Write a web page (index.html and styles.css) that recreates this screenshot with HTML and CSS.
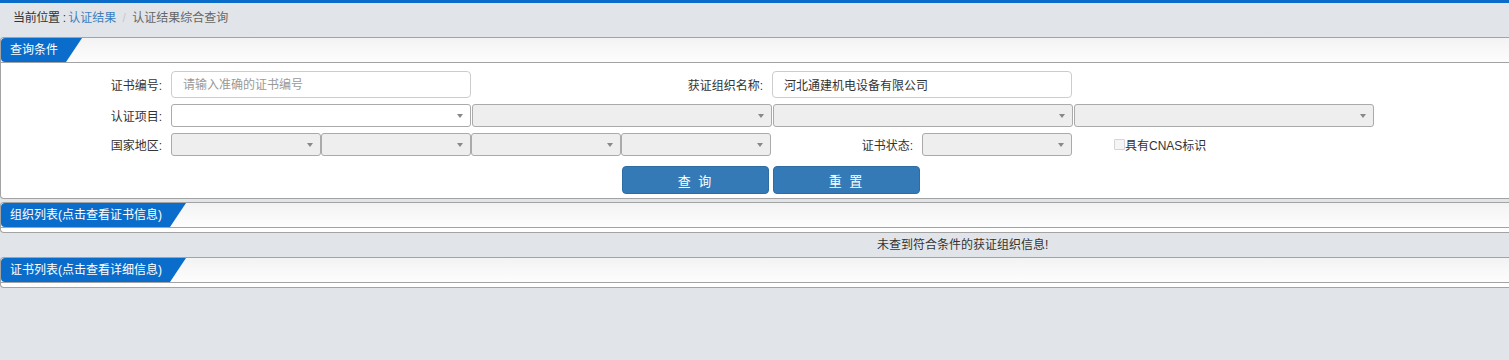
FILE: index.html
```html
<!DOCTYPE html>
<html>
<head>
  <meta charset="UTF-8">
  <title>认证结果综合查询</title>
  <link rel="stylesheet" href="styles.css">
</head>
<body>
  <div class="topbar"></div>
  <div class="crumb">
    <span class="here">当前位置 :</span>
    <a class="crumb-link" href="#">认证结果</a>
    <span class="sep">/</span>
    <span class="current">认证结果综合查询</span>
  </div>

  <div class="panel">
    <div class="panel-head"><span class="tab">查询条件</span></div>
    <div class="panel-body">
      <div class="row">
        <label class="lbl">证书编号:</label>
        <input class="txt" type="text" placeholder="请输入准确的证书编号">
        <label class="lbl lbl-wide">获证组织名称:</label>
        <input class="txt" type="text" value="河北通建机电设备有限公司">
      </div>
      <div class="row">
        <label class="lbl">认证项目:</label>
        <div class="sels">
          <div class="sel sel-wide sel-on"></div>
          <div class="sel sel-wide"></div>
          <div class="sel sel-wide"></div>
          <div class="sel sel-wide"></div>
        </div>
      </div>
      <div class="row">
        <label class="lbl">国家地区:</label>
        <div class="sels sels-tight">
          <div class="sel"></div>
          <div class="sel"></div>
          <div class="sel"></div>
          <div class="sel"></div>
        </div>
        <label class="lbl lbl-mid">证书状态:</label>
        <div class="sel"></div>
        <label class="cnas"><span class="box"></span>具有CNAS标识</label>
      </div>
      <div class="btns">
        <button class="btn" type="button">查 询</button>
        <button class="btn" type="button">重 置</button>
      </div>
    </div>
  </div>

  <div class="panel">
    <div class="panel-head"><span class="tab">组织列表(点击查看证书信息)</span></div>
    <div class="panel-body panel-empty"></div>
  </div>

  <p class="nodata">未查到符合条件的获证组织信息!</p>

  <div class="panel">
    <div class="panel-head"><span class="tab">证书列表(点击查看详细信息)</span></div>
    <div class="panel-body panel-empty"></div>
  </div>
</body>
</html>
```

FILE: styles.css
```css
body {
  margin: 0;
  background-color: #e1e5e9;
  font-family: "Liberation Sans", "Noto Sans CJK SC", sans-serif;
  font-size: 12px;
  color: #333;
  overflow: hidden;
}
.topbar {
  height: 3px;
  background-color: #0b6bc8;
}
.crumb {
  height: 34px;
  line-height: 30px;
  padding-left: 13px;
}
.here {
  letter-spacing: -0.3px;
}
.crumb-link {
  color: #3a7fc1;
  text-decoration: none;
  margin-left: -1px;
}
.sep {
  color: #c8c8c8;
  margin: 0 3px;
}
.current {
  color: #666;
}

.panel {
  background-color: #fff;
  border: 1px solid #a3a3a3;
  border-right: none;
  border-radius: 4px 0 0 4px;
  overflow: hidden;
  margin-bottom: 3px;
}
.panel-head {
  height: 24px;
  border-bottom: 1px solid #a3a3a3;
  background: linear-gradient(to bottom, #f3f3f3, #fdfdfd);
}
.tab {
  display: inline-block;
  height: 24px;
  line-height: 24px;
  padding: 0 24px 0 9px;
  color: #fff;
  background-color: #0a6dcb;
  border-radius: 4px 0 0 4px;
  clip-path: polygon(0 0, 100% 0, calc(100% - 16px) 100%, 0 100%);
}
.panel-body {
  padding: 8px 0 4px;
}
.panel-empty {
  height: 4px;
  padding: 0;
}

.row {
  display: flex;
  align-items: center;
  margin-bottom: 6px;
}
.lbl {
  flex: none;
  width: 170px;
  box-sizing: border-box;
  padding-right: 9px;
  text-align: right;
}
.lbl-wide {
  width: 301px;
}
.lbl-mid {
  width: 151px;
}
.txt {
  flex: none;
  width: 300px;
  height: 27px;
  box-sizing: border-box;
  border: 1px solid #ccc;
  border-radius: 4px;
  padding: 0 11px;
  font: inherit;
  color: #333;
  outline: none;
}
.txt::placeholder {
  color: #999;
}
.sels {
  display: flex;
  gap: 1px;
}
.sels-tight {
  gap: 0;
}
.sel {
  flex: none;
  position: relative;
  width: 150px;
  height: 23px;
  box-sizing: border-box;
  border: 1px solid #aaa;
  border-radius: 3px;
  background-color: #eee;
}
.sel-wide {
  width: 300px;
}
.sel-on {
  background-color: #fff;
}
.sel::after {
  content: "";
  position: absolute;
  right: 7px;
  top: 9px;
  border-left: 3px solid transparent;
  border-right: 3px solid transparent;
  border-top: 4px solid #888;
}
.cnas {
  display: flex;
  align-items: center;
  margin-left: 42px;
}
.box {
  width: 9px;
  height: 9px;
  border: 1px solid #d5d5d5;
  background-color: #f5f5f5;
  border-radius: 1px;
}

.btns {
  display: flex;
  gap: 4px;
  padding: 4px 0 0 621px;
}
.btn {
  width: 147px;
  height: 28px;
  border: 1px solid #2e6da4;
  border-radius: 4px;
  background-color: #337ab7;
  color: #fff;
  font: inherit;
  font-size: 13px;
  letter-spacing: 2px;
}

.nodata {
  margin: -3px 0 0;
  height: 24px;
  line-height: 24px;
  padding-left: 877px;
}
```
